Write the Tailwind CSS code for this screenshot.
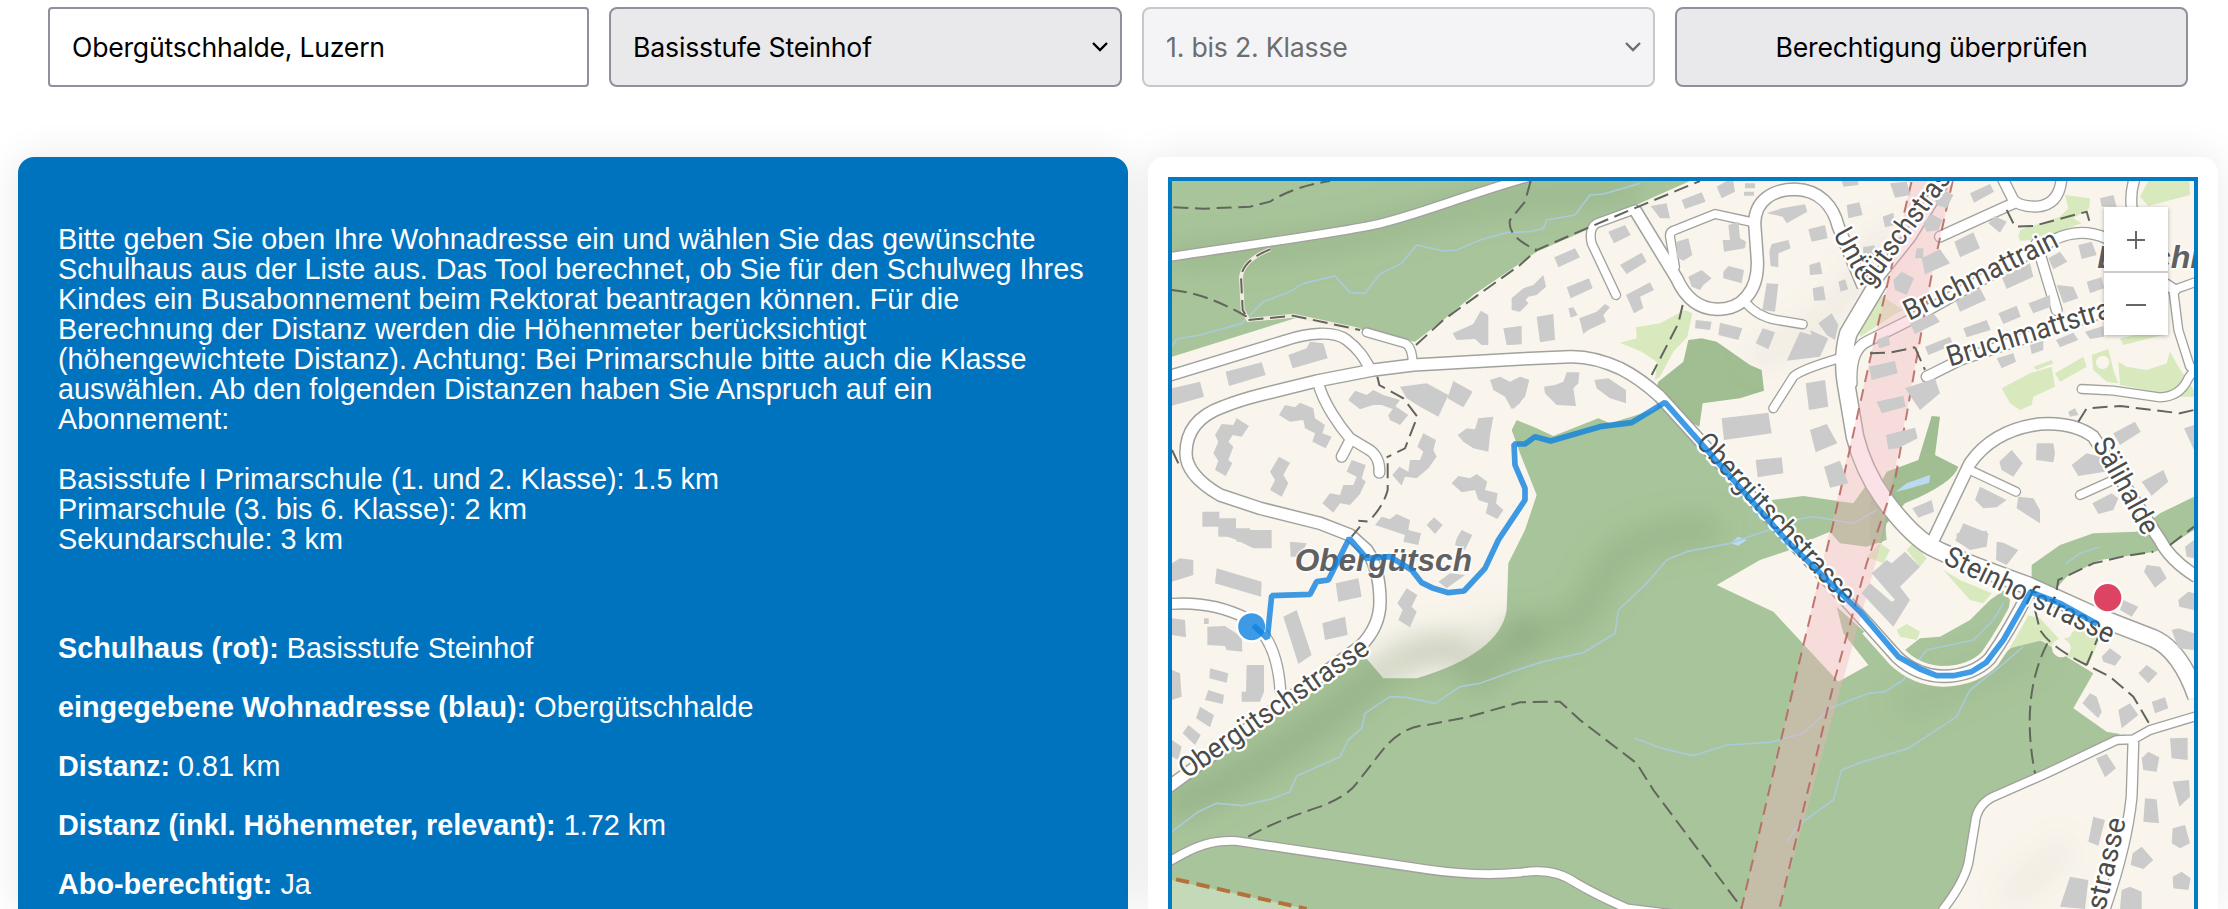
<!DOCTYPE html>
<html lang="de">
<head>
<meta charset="utf-8">
<title>Schulweg Luzern</title>
<script src="https://cdn.jsdelivr.net/npm/@tailwindcss/browser@4"></script>
</head>
<body class="bg-white h-[909px] overflow-hidden">
<form class="flex gap-5 pl-12 pr-10 pt-[7px] text-[26.67px] tracking-[-0.2px] font-['Inter',sans-serif] text-black">
  <div class="w-[541px] h-20 border-2 border-[#8f8f9d] rounded-[4px] bg-white flex items-center px-[22px]"><span class="tracking-[-0.25px]">Obergütschhalde, Luzern</span></div>
  <div class="w-[513px] h-20 border-2 border-[#8f8f9d] rounded-lg bg-[#e9e9ec] flex items-center justify-between pl-[22px] pr-[12px]"><span>Basisstufe Steinhof</span>
    <svg class="w-4 h-3" viewBox="0 0 16 12" fill="none" stroke="#000" stroke-width="2.4"><path d="M1 2l7 7 7-7"/></svg></div>
  <div class="w-[513px] h-20 border-2 border-[#c7c7ce] rounded-lg bg-[#f4f4f6] text-[#6d6d6e] flex items-center justify-between pl-[22px] pr-[12px]"><span>1. bis 2. Klasse</span>
    <svg class="w-4 h-3" viewBox="0 0 16 12" fill="none" stroke="#6d6d6e" stroke-width="2.4"><path d="M1 2l7 7 7-7"/></svg></div>
  <div class="w-[513px] h-20 border-2 border-[#8f8f9d] rounded-lg bg-[#e9e9ec] flex items-center justify-center"><span>Berechtigung überprüfen</span></div>
</form>
<main class="flex gap-5 pl-[18px] mt-[70px]">
  <section class="w-[1110px] h-[752px] shrink-0 rounded-t-2xl bg-[#0073bf] shadow-[0_0_40px_rgba(0,0,0,0.09)] text-white px-10 pt-[67px] text-[28.8px] leading-[30px] font-['Liberation_Sans',sans-serif] whitespace-nowrap">
    <p>Bitte geben Sie oben Ihre Wohnadresse ein und wählen Sie das gewünschte<br>Schulhaus aus der Liste aus. Das Tool berechnet, ob Sie für den Schulweg Ihres<br>Kindes ein Busabonnement beim Rektorat beantragen können. Für die<br>Berechnung der Distanz werden die Höhenmeter berücksichtigt<br>(höhengewichtete Distanz). Achtung: Bei Primarschule bitte auch die Klasse<br>auswählen. Ab den folgenden Distanzen haben Sie Anspruch auf ein<br>Abonnement:<br><br>Basisstufe I Primarschule (1. und 2. Klasse): 1.5 km<br>Primarschule (3. bis 6. Klasse): 2 km<br>Sekundarschule: 3 km</p>
    <div class="flex flex-col gap-[29px] mt-[79px]">
      <p><b>Schulhaus (rot):</b> Basisstufe Steinhof</p>
      <p><b>eingegebene Wohnadresse (blau):</b> Obergütschhalde</p>
      <p><b>Distanz:</b> 0.81 km</p>
      <p><b>Distanz (inkl. Höhenmeter, relevant):</b> 1.72 km</p>
      <p><b>Abo-berechtigt:</b> Ja</p>
    </div>
  </section>
  <section class="w-[1070px] h-[752px] shrink-0 rounded-t-2xl bg-white shadow-[0_0_40px_rgba(0,0,0,0.09)] px-5 pt-5">
    <div class="relative w-[1030px] h-[732px] border-4 border-b-0 border-[#007ac5] overflow-hidden">
      <svg class="block w-[1022px] h-[728px]" viewBox="36 33 3066 2184" fill="none">
        <defs>
          <filter id="blur" x="-50%" y="-50%" width="200%" height="200%"><feGaussianBlur stdDeviation="42"/></filter>
          <g id="rn" stroke-linecap="round" stroke-linejoin="round">
            <path d="M620 487L735 520Q757 530 758 580"/>
            <path d="M1368 375L1295 220Q1285 175 1310 160L1425 118M1545 290L1530 200Q1528 185 1545 180L1665 132L1770 155M1755 395Q1790 440 1850 450L1928 463M1840 715L1900 620Q1920 600 2030 567"/>
            <path d="M2440 905L2568 965M2760 975L2860 930M2765 657L2860 662L3000 682Q3060 680 3085 625L3110 590M3090 590L3055 480L3040 360L3110 335"/>
            <path d="M3110 1638L2970 1680L2920 1708L2870 1710L2660 1810L2500 1880Q2450 1905 2445 1960L2425 2080Q2410 2140 2350 2217"/>
            <path d="M36 2070C110 2025 160 2010 230 2013L800 2098Q950 2120 1080 2108Q1180 2090 1250 2140Q1310 2175 1400 2215L1600 2240"/>
            <path d="M0 265C400 205 520 190 640 165S900 80 1110 20"/>
          </g>
          <g id="rm" stroke-linecap="round" stroke-linejoin="round">
            <path d="M475 640C490 700 540 770 570 805L620 835C650 850 660 880 658 908M570 812L545 860"/>
            <path d="M20 620L380 510C440 490 520 480 560 510C600 540 615 570 630 595"/>
            <path d="M2630 220L2690 420M2300 620L2400 570L2850 420M2340 200L2560 100M2525 20L2560 90Q2580 110 2630 110Q2700 105 2705 20M2925 20Q2910 70 2915 110"/>
            <path d="M2075 640Q2070 540 2120 515L2250 450L2680 210Q2760 170 2840 205L2950 300L3045 360"/>
            <path d="M2920 1720L2915 1880Q2900 2030 2830 2230"/>
            <path d="M20 1303Q150 1290 260 1345Q350 1400 361 1560"/>
          </g>
          <g id="rl" stroke-linejoin="round">
            <path d="M20 1855L600 1430Q660 1370 660 1295Q660 1200 620 1140L570 1095L480 1060L300 1015L180 975C110 935 78 890 78 850C78 780 120 735 190 710Q240 690 300 675L470 633L640 600L760 585L1080 567L1230 560Q1300 558 1380 595Q1440 625 1500 680L1900 1120L2130 1370L2210 1460Q2270 1517 2350 1519Q2440 1517 2490 1465Q2550 1380 2612 1255"/>
            <path d="M1425 120L1550 325Q1590 415 1670 418Q1730 418 1760 380Q1795 340 1792 270L1784 160C1785 90 1840 58 1905 58C1980 60 2020 110 2035 170L2110 350"/>
            <path d="M2320 1110L2430 880Q2500 780 2640 762Q2740 755 2800 800L2980 1080L3000 1110Q3030 1170 3110 1220"/>
            <path d="M2360 20L2250 200L2130 350"/>
          </g>
          <g id="rx" stroke-linejoin="round"><path d="M2160 330L2065 490Q2045 560 2058 640L2085 800Q2110 900 2170 985Q2240 1080 2300 1122Q2350 1155 2600 1245L2800 1335L2980 1405Q3060 1440 3110 1580"/></g>
        </defs>
        <rect x="36" y="33" width="3066" height="2184" fill="#f9f5ed"/>
        <g fill="#a8c49a">
          <path d="M36 33H1590L1450 95L1280 180L1130 245L1080 280L940 375L850 450L765 515L610 480L420 440L36 560Z"/>
          <path d="M1055 780L1070 750L1130 775L1180 798L1315 745L1350 760L1480 720L1515 690L1890 1140L1800 1170L1670 1245L1840 1325L2035 1535L2125 1485L2050 1390L2030 1310L2130 1400L2210 1490L2350 1545L2450 1520L2570 1420L2600 1400L2650 1415L2720 1460L2800 1510L2740 1615L2840 1685L2880 1692L2800 1730L2620 1820L2480 1890L2445 1930L2425 2040L2400 2130L2340 2217H36V1855L615 1460L670 1525H770Q1020 1450 1040 1320L1045 1180L1095 1080L1130 975L1080 850Z"/>
          <path d="M1480 690L1495 635L1570 575L1585 510L1625 505L1670 515L1770 585L1805 600L1812 662L1740 685L1628 700L1618 770L1560 740Z" fill="#a1be93"/>
          <path d="M1835 990L1930 978L2080 1000L2130 930L2170 1000L2180 1110L2120 1130L2040 1120L2010 1085L1950 1110L1900 1120Z"/>
          <path d="M2180 905L2275 870L2315 738L2340 740L2325 855L2395 890Q2380 940 2235 1000L2180 1060L2165 1120L2130 1115V1000Z" fill="#a1be93"/>
          <path d="M2615 1185L2700 1125L2800 1090L2930 1085L3000 1030L3102 980V1080L3030 1125L2985 1145L2820 1170L2720 1220L2680 1265L2615 1230Z"/>
          <path d="M2235 1440L2280 1405L2340 1400L2430 1350L2490 1290L2530 1262L2550 1290L2540 1360L2500 1430L2440 1480L2350 1500L2280 1480Z"/>
        </g>
        <g filter="url(#blur)" fill="none" stroke-linecap="round">
          <path d="M60 1900Q350 1780 600 1560T960 1510L1090 1390" stroke="#6f8f63" stroke-opacity=".3" stroke-width="100"/>
          <path d="M1090 1390Q1260 1390 1320 1240T1640 1080" stroke="#6f8f63" stroke-opacity=".26" stroke-width="90"/>
          <path d="M60 260Q500 230 760 150T1400 60" stroke="#6f8f63" stroke-opacity=".22" stroke-width="80"/>
          <path d="M740 1470Q900 1440 990 1320" stroke="#887766" stroke-opacity=".16" stroke-width="30"/>
          <path d="M1800 560L2000 450L2180 200M2560 2170L2700 2050" stroke="#998877" stroke-opacity=".1" stroke-width="80"/>
          <path d="M2250 1600L2600 1450" stroke="#6f8f63" stroke-opacity=".12" stroke-width="100"/>
        </g>
        <path d="M36 2130L440 2217H36Z" fill="#c3d9b8"/>
        <g fill="#d8e9bd">
          <path d="M1380 518L1430 505L1428 472L1500 460L1575 420L1597 430L1582 500L1540 545L1500 620L1485 630L1490 575L1445 545Z"/>
          <path d="M2575 200L2580 180L2700 140L2725 115L2715 75L2790 85L2788 115L2740 145L2765 160L2620 210L2580 212Z"/>
          <path d="M2940 80L2965 33H3088L3090 75L2965 108ZM2100 470L2160 375L2230 420L2210 430L2100 500Z"/>
          <path d="M2525 655L2610 610L2675 590L2685 650L2620 680L2615 705L2580 720L2550 700ZM2620 590L2675 570L2680 580L2630 600ZM2685 610L2770 560L2780 590L2700 635ZM2795 555L2845 537L2860 600L2875 640L2840 635L2800 600ZM2875 575L2900 590L2960 600L3020 580L3030 545L3055 590L3102 660V680H3060L2880 645ZM2880 505L3000 480L3010 495L2890 525Z"/>
          <path d="M2600 1335L2640 1345L2700 1410L2730 1400Q2740 1370 2780 1375L2820 1405L2785 1485L2700 1450L2650 1410L2550 1435L2590 1340Z"/>
          <path d="M2350 1200L2400 1230L2495 1270L2470 1300L2430 1290ZM2210 1380L2240 1362L2280 1385L2270 1410L2220 1400ZM2120 1160L2160 1120L2190 1140L2170 1180ZM2240 1140L2260 1120L2300 1165L2280 1190Z"/>
        </g>
        <circle cx="2704" cy="1434" r="28" fill="#f9f5ed"/>
        <circle cx="2828" cy="577" r="20" fill="#f9f5ed"/>
        <path d="M2207 965L2240 940L2310 915L2308 938L2240 958ZM1710 1120L1735 1100L1760 1110L1735 1127Z" fill="#bcd9f2"/>
        <g stroke="#a9cbd8" stroke-width="5" stroke-linejoin="round">
          <path d="M36 530L50 507L120 495L245 460L310 395L390 365L430 340L525 318L570 368L615 370L660 312L725 280L770 225L850 243L890 240L960 210L1040 188L1110 185L1150 175L1160 150L1245 135L1290 75L1330 72L1440 40"/>
          <path d="M36 1985L115 1925L170 1900L250 1907L340 1885L390 1865L410 1818L540 1760L565 1710L605 1675L615 1630L690 1580L740 1582L825 1600L900 1550L960 1540L1080 1497L1150 1475L1270 1448L1365 1390L1375 1320L1460 1240L1520 1170L1580 1145L1710 1120L1820 1082L1900 1050L1960 1040L2080 1060L2150 1020"/>
          <path d="M1425 1705L1505 1735L1600 1757L1700 1725L1830 1717L1930 1690L2010 1615L2125 1570L2175 1565L2230 1530L2300 1440L2440 1410L2500 1350L2530 1300M1880 2015L1915 1965L2020 1890L2045 1800L2100 1778L2245 1735L2390 1640L2430 1560L2520 1490L2590 1430M2718 1180L2760 1150L2820 1130"/>
        </g>
        <path d="M2130 1370L2210 1460Q2270 1517 2350 1519Q2440 1517 2490 1465Q2550 1380 2612 1255" stroke="#fbf7f0" stroke-width="62"/>
        <g stroke="#a1a19d">
          <use href="#rn" stroke-width="31"/><use href="#rm" stroke-width="37"/><use href="#rl" stroke-width="42"/><use href="#rx" stroke-width="58"/>
        </g>
        <g stroke="#fff">
          <use href="#rn" stroke-width="23"/><use href="#rm" stroke-width="29"/><use href="#rl" stroke-width="33"/><use href="#rx" stroke-width="49"/>
        </g>
        <path d="M1744 2217L2255 33H2378L2312 330L2245 700L2155 1150L1858 2217Z" fill="#f1b3be" fill-opacity=".38"/>
        <path d="M1744 2217L1930 1425L2015 1080L2150 480L2255 33M2378 33L2312 330L2205 930L2120 1180L2025 1525L1858 2217" stroke="#b5645c" stroke-width="6" stroke-dasharray="36 22" stroke-opacity=".85"/>
        <g fill="#cbcbcb">
          <!-- north-west quarter -->
          <path d="M36 655L120 635L132 680L36 707ZM197 605L305 577L317 615L207 648ZM385 555L440 535L450 515L490 520L503 565L398 595ZM878 490L940 462L962 422L985 435V525H965L945 507L890 510ZM1055 385L1080 370L1105 400L1080 425L1055 420ZM1030 475L1085 468V523L1040 525Z"/>
          <path d="M565 690L585 662L620 675L640 660L670 675L720 690L700 718L665 705L640 705L600 718ZM685 735L705 708L745 735L720 765L690 750ZM720 650L800 640L865 675L835 740L780 710L740 685ZM880 633L938 665L910 712L862 685ZM990 630L1020 620L1050 635L1080 620L1105 630L1080 700L1055 717L1035 680L1000 660Z"/>
          <path d="M357 735L375 705L405 712L420 698L460 715L465 745L495 765L487 790L515 800L497 835L457 815L465 790L435 775L430 750L390 755ZM165 795L185 762L220 765L230 745L267 768L245 800L218 795L205 815L220 830L205 870L217 880L197 918L165 900L175 872L160 850L175 815ZM357 860L390 878L370 915L385 940L365 980L330 960L345 930L330 905ZM487 1000L510 970L540 975L550 945L580 945L590 920L560 905L575 870L617 885L605 925L617 935L600 972L570 1005L540 1000L520 1028ZM697 915L718 890L745 905L750 870L780 870L790 845L772 830L790 790L828 810L820 840L830 860L805 895L770 925L735 920L725 947Z"/>
          <path d="M893 795L920 775L945 778L955 745L1000 740L990 795L985 845L940 835L910 815ZM875 940L895 918L930 925L950 912L982 935L975 960L1013 970L1008 1000L1030 1020L1012 1047L977 1030L985 1000L955 990L945 960L905 967ZM127 1025H178V1045H228V1075H270V1090H330V1130H275V1115H230V1100H175V1070H127ZM645 1065L665 1040L690 1048L710 1032L750 1050L745 1080L783 1090L775 1125L730 1115L735 1095L690 1080ZM800 1065L822 1042L848 1065L825 1092ZM890 1105L905 1080L937 1095L915 1140L885 1125Z"/>
          <!-- north centre -->
          <path d="M1055 385L1090 355L1120 345L1150 315L1158 350L1130 375L1105 380L1070 425ZM1183 262L1245 235L1260 262L1195 292ZM1220 352L1287 325L1298 355L1232 385ZM1225 415L1240 412L1253 435L1232 443ZM1258 445L1310 425L1335 402L1350 412L1330 435L1338 455L1285 480L1270 492ZM1130 440L1180 432L1185 510L1140 517ZM1048 475L1080 468L1085 520L1048 525ZM1345 185L1395 165L1412 195L1362 220ZM1380 285L1445 248L1460 275L1400 312ZM1398 375L1470 337L1482 360L1440 380L1450 415L1422 430ZM1472 108L1520 100L1530 145L1500 145ZM1565 90L1625 67L1637 95L1575 117ZM1670 50L1700 33H1720L1725 65L1685 85ZM1755 40H1785V55H1755ZM1752 65H1782V77H1752Z"/>
          <path d="M1550 215L1585 205L1597 255L1570 272L1550 262ZM1705 165L1735 155L1740 205L1758 215L1755 235L1692 245L1688 210H1710ZM1585 320L1625 300L1655 325L1630 345L1620 360L1595 350ZM1690 305L1705 288L1752 300L1745 340L1690 325ZM1820 130L1865 115L1935 103L1942 125L1880 160L1868 140ZM1828 245L1835 222L1885 210L1892 235L1855 250V292L1832 288ZM1820 340L1855 342L1845 425L1807 420ZM1945 178L1995 165L2003 205L1955 215ZM1948 285L1980 275L1987 312L1950 315ZM1958 355L1990 348L1997 390L1962 392ZM2035 335L2055 328L2065 358L2042 365ZM2060 105L2098 97L2108 135L2065 145ZM2045 33H2095V45L2050 50ZM2110 235L2140 225V265H2115Z"/>
          <path d="M1607 450L1655 455L1650 480L1605 475ZM1680 458L1747 475L1735 510L1675 495ZM1808 475L1845 487L1825 538L1787 520ZM1920 485L1955 495L1950 480L2005 505L1980 560L1880 572ZM1975 460L2015 430L2035 465L2025 510L2000 495ZM1685 745L1825 728L1835 790L1692 810ZM1787 870L1865 862L1870 910L1793 922ZM1937 640L1995 630L2005 710L1947 720ZM1950 780L2000 762L2032 820L1967 847ZM1992 890L2040 872L2065 940L2010 953ZM1055 665L1080 620L1108 630L1095 680L1060 718ZM1152 650L1185 645L1210 635L1220 607H1258L1255 640L1240 655L1248 708L1190 705L1155 670ZM1303 630L1345 625L1398 660V700L1350 685L1310 655Z"/>
          <!-- north-east -->
          <path d="M2190 40L2240 35L2252 75L2205 83ZM2168 140L2200 128L2205 165L2175 172ZM2110 230L2145 228L2150 260L2110 270ZM2325 85L2340 55L2380 75L2360 115L2330 105ZM2290 160L2315 132L2347 150L2335 180L2300 185ZM2430 70L2490 42L2502 65L2442 98ZM2485 160L2505 138L2540 155L2520 188ZM2383 215L2440 187L2460 235L2400 262ZM2285 265L2340 238L2370 280L2295 313ZM2200 330L2225 305L2262 325L2240 375L2205 360ZM2270 235H2290V265H2265ZM2665 265L2700 245L2722 275L2680 298ZM2755 225L2795 215L2810 255L2765 267ZM2525 320L2610 280L2620 320L2540 357ZM2388 395L2460 355L2478 390L2400 425ZM2605 400L2670 375L2672 410L2620 430ZM2690 345L2740 350L2755 385L2710 400ZM2780 335L2825 322L2832 355L2790 370ZM2515 430L2570 407L2582 440L2530 462ZM2410 475L2480 450L2492 480L2420 502ZM2250 460L2320 430L2340 455L2265 492ZM2295 530L2370 500L2380 525L2305 555ZM2610 525L2650 512L2650 540L2615 552ZM2688 510L2740 488L2755 510L2700 532ZM2775 485L2830 468L2832 500L2790 507ZM2510 565L2560 550L2568 575L2525 595Z"/>
          <path d="M2150 510L2185 495L2190 525L2158 535ZM2127 590L2205 573L2213 610L2135 630ZM2150 695L2230 677L2237 710L2165 730ZM2178 795L2265 773L2273 805L2215 835L2185 838ZM2235 655L2325 625L2340 670L2280 720ZM2820 85L2860 75L2870 110H2825ZM2725 725L2745 715L2755 735L2730 740ZM2860 790L2925 755L2942 785L2880 825ZM2630 820L2680 820L2685 850L2680 877L2628 870ZM2518 875L2555 840L2588 880L2560 920L2525 900ZM2735 885L2780 850L2820 860L2835 905L2755 918ZM2945 935L3010 900L3025 935L2975 977ZM2445 990L2460 950L2540 990L2510 1012L2470 1015ZM2575 980L2620 985L2640 1020V1060L2570 1015ZM2797 1000L2855 970L2875 985L2860 1020L2815 1032ZM2257 1015L2315 990L2322 1025L2275 1043ZM2390 1105L2410 1060L2485 1090L2480 1130L2430 1140L2385 1110ZM3072 775L3102 765V840Z"/>
          <!-- south-west -->
          <path d="M175 1080H335V1135H280L230 1110L175 1090ZM36 1180L60 1165L100 1170V1215L36 1235ZM170 1195L305 1235L303 1280L165 1240ZM390 1115L440 1120L420 1160L392 1160ZM527 1240L595 1225L605 1280L535 1295ZM740 1255L772 1275L755 1310L770 1325L750 1372L715 1350L728 1320L712 1300ZM487 1360L555 1340L563 1395L495 1410ZM370 1340L410 1320L455 1455L415 1482ZM835 1235L870 1210L915 1215L860 1255ZM36 1345L75 1350L78 1402L36 1395ZM142 1370L195 1368L245 1400L247 1445L200 1440L195 1428L142 1425ZM132 1345H146V1362H132ZM150 1495L205 1510L200 1538L148 1525ZM260 1485H312V1565L300 1595H245V1565H258ZM36 1500L60 1510L65 1580L36 1590ZM145 1560L192 1575L188 1602L135 1590ZM120 1610L162 1635L150 1672L108 1645ZM85 1665L122 1695L105 1725L68 1690ZM36 1710L65 1730L55 1770L36 1760Z"/>
          <!-- south-east -->
          <path d="M2135 1210L2180 1170L2195 1180L2235 1145L2280 1190L2220 1250L2250 1290L2200 1370L2105 1270L2130 1240L2195 1295L2205 1290ZM2510 1115L2530 1118L2575 1140L2540 1185L2508 1170ZM2390 1090L2480 1082L2480 1120L2440 1135L2390 1115ZM2960 1185L3000 1190L3020 1225L2985 1253L2952 1205ZM2890 1290L2935 1310L2915 1340L2880 1320ZM3055 1290L3085 1265L3102 1270V1320L3058 1310ZM3035 1380L3055 1375L3102 1390V1440L3055 1435ZM2825 1460L2850 1435L2885 1460L2865 1487L2830 1475ZM2935 1510L2960 1485L2993 1510L2965 1540ZM2767 1600L2790 1570L2810 1580L2825 1625L2815 1645ZM2875 1620L2910 1600L2935 1635L2885 1675ZM2975 1595L3015 1582L3025 1615L2985 1630ZM3030 1705L3083 1703V1770L3035 1765ZM2945 1765L2965 1745L2998 1762L2990 1805L2950 1800ZM2808 1765L2840 1752L2868 1795L2835 1822ZM3038 1835L3087 1830L3090 1880L3058 1910ZM2955 1885L2990 1888L2997 1960L2950 1955ZM2800 1940L2835 1950L2815 2027L2785 2015ZM3038 1975L3075 1965L3090 2020L3060 2035L3035 2020ZM2918 2050L2945 2030L2980 2070L2950 2097L2912 2085ZM3038 2120L3065 2105L3092 2125L3085 2160L3040 2155ZM2730 2120L2785 2130L2775 2217L2700 2210ZM2885 2160L2910 2150L2945 2165V2217H2880ZM3075 1130L3102 1110V1165L3080 1160Z"/>
        </g>
        <path d="M330 238Q250 270 243 320L248 420L265 450L400 437L600 480" stroke="#f3ebe0" stroke-width="12"/>
        <g stroke="#62655b" stroke-width="6" stroke-dasharray="45 20">
          <path d="M40 112L130 116L270 110L330 95Q400 50 510 33M36 360Q140 370 260 440M330 238Q250 270 243 320L248 420L265 450L400 437L600 480M768 525L850 450L940 385L1080 285L1130 240L1280 175L1430 112L1620 33M1112 33L1095 95L1050 150Q1040 200 1130 240"/>
          <path d="M1568 405L1555 460L1475 615M652 620L658 645L730 685L772 740L735 835L680 862M683 880L683 960Q670 1010 625 1055L595 1052M600 1070L575 1100"/>
          <path d="M265 2000Q330 1960 480 1910Q560 1880 590 1840L660 1750Q720 1670 800 1665L920 1642L1080 1597L1200 1595L1260 1650L1430 1780L1480 1860L1744 2212"/>
          <path d="M2540 120L2565 170L2620 168L2780 125L2790 160M2130 550L2190 548L2265 532M2265 532L2295 600M2755 755L2780 715L2880 708L3060 730L3102 720"/>
          <path d="M2690 1260L2695 1230L2800 1180L2900 1157L2980 1145M3030 1125L3102 1070M2625 1320L2640 1380Q2670 1430 2780 1485L2850 1520L2920 1580L2970 1665M2662 1420Q2580 1580 2625 1810M2780 1485L2815 1400M36 840L55 880"/>
        </g>
        <path d="M48 2128L440 2217" stroke="#b3713c" stroke-width="12" stroke-dasharray="40 23"/>
        <g font-family="Roboto,'Open Sans',sans-serif" font-size="86" fill="#4b4b49" stroke="#fff" stroke-width="14" stroke-linejoin="round" paint-order="stroke">
          <text transform="translate(80 1828) rotate(-34.6)" textLength="672" lengthAdjust="spacingAndGlyphs">Obergütschstrasse</text>
          <text transform="translate(1604 820) rotate(47.4)" textLength="660" lengthAdjust="spacingAndGlyphs">Obergütschstrasse</text>
          <text transform="translate(2018 193) rotate(61)" textLength="190" lengthAdjust="spacingAndGlyphs">Unter</text>
          <text transform="translate(2133 354) rotate(-53.6)" textLength="490" lengthAdjust="spacingAndGlyphs">gütschstrasse</text>
          <text transform="translate(2248 453) rotate(-26.4)" textLength="505" lengthAdjust="spacingAndGlyphs">Bruchmattrain</text>
          <text transform="translate(2370 590) rotate(-17)" textLength="635" lengthAdjust="spacingAndGlyphs">Bruchmattstrasse</text>
          <text transform="translate(2796 822) rotate(61)" textLength="318" lengthAdjust="spacingAndGlyphs">Sälihalde</text>
          <text transform="translate(2347 1180) rotate(25.8)" textLength="555" lengthAdjust="spacingAndGlyphs">Steinhofstrasse</text>
          <text transform="translate(2898 1950) rotate(-77)" text-anchor="end">gstrasse</text>
        </g>
        <g font-family="'Liberation Sans',sans-serif" font-weight="bold" font-style="italic" font-size="95" fill="#606060" stroke="#fff" stroke-opacity=".65" stroke-width="10" paint-order="stroke">
          <text x="404" y="1203" textLength="532" lengthAdjust="spacingAndGlyphs">Obergütsch</text>
          <text x="2812" y="294" textLength="365" lengthAdjust="spacingAndGlyphs">Bruchm</text>
        </g>
        <circle cx="275" cy="1370" r="44" fill="#3f9ae5" stroke="#fff" stroke-width="7"/>
        <path d="M280 1366L322 1405L335 1277L450 1273L470 1235L505 1230L568 1105L620 1165L690 1160L755 1200L785 1238L820 1255L865 1268L912 1263L975 1195L1015 1110L1095 990L1095 955L1065 885L1062 822L1095 822L1125 800L1172 813L1320 770L1415 758L1515 697L1880 1112L2100 1325L2215 1460L2280 1497L2330 1517H2380L2435 1505L2478 1478L2530 1410L2612 1266L2700 1300L2812 1362" stroke="#0f82de" stroke-opacity=".8" stroke-width="17" stroke-linejoin="bevel"/>
        <circle cx="2843" cy="1283" r="44" fill="#dd4464" stroke="#fff" stroke-width="6"/>
      </svg>
      <div class="absolute top-[26px] right-[26px] w-16 h-32 bg-white shadow-[0_1px_4px_rgba(0,0,0,0.3)] flex flex-col divide-y-2 divide-[#ccc]">
        <div class="h-[66px] flex items-center justify-center"><svg class="w-5 h-5" viewBox="0 0 20 20" stroke="#666" stroke-width="2"><path d="M1 11H19M10 2V20"/></svg></div>
        <div class="flex-1 flex items-center justify-center"><svg class="w-5 h-5" viewBox="0 0 20 20" stroke="#666" stroke-width="2"><path d="M0 11H20"/></svg></div>
      </div>
    </div>
  </section>
</main>
</body>
</html>
